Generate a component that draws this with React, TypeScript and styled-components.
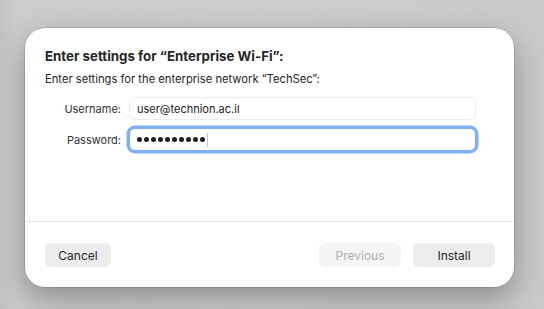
import React from "react";
import styled, { createGlobalStyle } from "styled-components";

const Global = createGlobalStyle`
  html, body { margin: 0; padding: 0; }
  body {
    width: 544px; height: 309px; overflow: hidden;
    background: #c9c9c9;
    font-family: Inter, "Noto Sans", sans-serif;
    -webkit-font-smoothing: antialiased;
  }
`;

const Page = styled.div`
  width: 544px;
  height: 309px;
  box-sizing: border-box;
  padding: 28px 0 0 25px;
  background: linear-gradient(90deg, #c2c2c2 0%, #cbcbcb 3%, #cccccc 50%, #c9c9c9 100%);
`;

const Dialog = styled.div`
  width: 489px;
  height: 259px;
  background: #ffffff;
  border-radius: 20px;
  box-shadow: 0 0 0 0.5px rgba(0, 0, 0, 0.22), 0 12px 30px rgba(0, 0, 0, 0.3);
  display: flex;
  flex-direction: column;
  overflow: hidden;
`;

const Body = styled.div`
  flex: 1;
  padding: 20px 38px 0 20px;
  display: flex;
  flex-direction: column;
`;

const Title = styled.div`
  font-size: 13.3px;
  font-weight: 700;
  color: #262626;
  line-height: 16px;
`;

const Subtitle = styled.div`
  margin-top: 8px;
  font-size: 11.2px;
  color: #262626;
  line-height: 14px;
`;

const Form = styled.div`
  margin-top: 11px;
  display: grid;
  grid-template-columns: 76px 1fr;
  column-gap: 8px;
  row-gap: 8px;
  align-items: center;
`;

const Label = styled.label`
  font-size: 11px;
  color: #333333;
  text-align: right;
`;

const Field = styled.div<{ $focused?: boolean }>`
  height: 23px;
  box-sizing: border-box;
  border-radius: 6px;
  display: flex;
  align-items: center;
  padding-left: 7px;
  font-size: 11px;
  color: #222222;
  background: #ffffff;
  border: 1px solid ${(p) => (p.$focused ? "#7fb0f5" : "#ececec")};
  box-shadow: ${(p) => (p.$focused ? "0 0 0 2.5px #7fb0f5" : "none")};
`;

const Dots = styled.span`
  display: flex;
  gap: 2px;
`;

const Dot = styled.span`
  width: 5px;
  height: 5px;
  border-radius: 50%;
  background: #1e1e1e;
`;

const Caret = styled.span`
  display: inline-block;
  width: 1px;
  height: 14px;
  margin-left: 2px;
  background: #a6ccf6;
`;

const Divider = styled.div`
  height: 1px;
  background: #e6e6e6;
`;

const Footer = styled.div`
  height: 65px;
  box-sizing: border-box;
  padding: 21px 19px 0 20px;
  display: flex;
  align-items: flex-start;
`;

const Spacer = styled.div`
  flex: 1;
`;

const Button = styled.button<{ $w: number; $disabled?: boolean }>`
  width: ${(p) => p.$w}px;
  height: 24px;
  border: none;
  border-radius: 6px;
  background: ${(p) => (p.$disabled ? "#f5f5f5" : "#ececec")};
  color: ${(p) => (p.$disabled ? "#b0b0b0" : "#262626")};
  font-family: Inter, "Noto Sans", sans-serif;
  font-size: 12px;
  padding: 0;
  & + & { margin-left: 12px; }
`;

export default function App() {
  const dots = Array.from({ length: 10 }, (_, i) => <Dot key={i} />);
  return (
    <>
      <Global />
      <Page>
        <Dialog>
          <Body>
            <Title>Enter settings for “Enterprise Wi-Fi”:</Title>
            <Subtitle>Enter settings for the enterprise network “TechSec”:</Subtitle>
            <Form>
              <Label>Username:</Label>
              <Field>user@technion.ac.il</Field>
              <Label>Password:</Label>
              <Field $focused aria-label="password">
                <Dots>{dots}</Dots>
                <Caret />
              </Field>
            </Form>
          </Body>
          <Divider />
          <Footer>
            <Button $w={66}>Cancel</Button>
            <Spacer />
            <Button $w={82} $disabled>Previous</Button>
            <Button $w={82}>Install</Button>
          </Footer>
        </Dialog>
      </Page>
    </>
  );
}
